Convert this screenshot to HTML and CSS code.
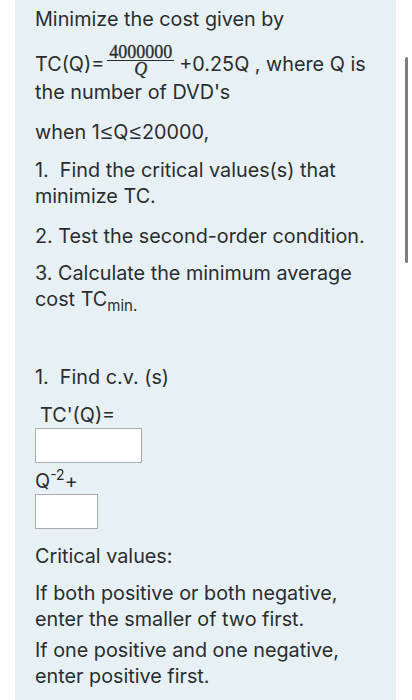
FILE: index.html
```html
<!DOCTYPE html>
<html>
<head>
<meta charset="utf-8">
<link rel="stylesheet" href="styles.css">
</head>
<body>
<div class="panel">
  <p class="l intro">Minimize the cost given by</p>
  <p class="l formula">TC(Q)=<span class="frac"><span class="num">4000000</span><span class="den">Q</span></span>+0.25Q , where Q is</p>
  <p class="l dvd">the number of DVD's</p>
  <p class="l when">when 1<span class="le">≤</span>Q<span class="le">≤</span>20000,</p>
  <p class="l step1">1.&nbsp; Find the critical values(s) that minimize TC.</p>
  <p class="l step2">2. Test the second-order condition.</p>
  <p class="l step3">3. Calculate the minimum average cost TC<sub class="sub">min.</sub></p>

  <p class="l find">1.&nbsp; Find c.v. (s)</p>
  <p class="l deriv">TC'(Q)=</p>
  <div class="box wide"></div>
  <p class="l qterm">Q<sup class="sup">-2</sup>+</p>
  <div class="box narrow"></div>

  <p class="l crit">Critical values:</p>
  <p class="l both">If both positive or both negative, enter the smaller of two first.</p>
  <p class="l one">If one positive and one negative, enter positive first.</p>
</div>
<div class="scrollbar"></div>
</body>
</html>
```

FILE: styles.css
```css
html, body {
  margin: 0;
  padding: 0;
  background: #ffffff;
}
body {
  font-family: Inter, "Noto Sans", "Liberation Sans", sans-serif;
  font-size: 19.8px;
  color: #2a2d2f;
  width: 412px;
  height: 700px;
  overflow: hidden;
}
.panel {
  margin-left: 15px;
  width: 381px;
  min-height: 700px;
  background: #e7f1f5;
  padding: 6px 20px 0 20px;
  box-sizing: border-box;
}
.l {
  margin: 0;
  line-height: 26px;
}
.formula {
  margin-top: 13px;
  white-space: nowrap;
}
.frac {
  display: inline-flex;
  flex-direction: column;
  align-items: center;
  font-family: "Liberation Serif", "DejaVu Serif", serif;
  vertical-align: 13px;
  margin: 0 5px 0 3px;
  line-height: 14px;
}
.num {
  font-size: 18px;
  line-height: 14px;
  padding: 0 2px 1px;
  border-bottom: 1.5px solid #2a2d2f;
  -webkit-text-stroke: 0.3px #2a2d2f;
}
.den {
  font-size: 18px;
  line-height: 15px;
  padding-top: 1px;
  font-style: italic;
  -webkit-text-stroke: 0.3px #2a2d2f;
}
.dvd { margin-top: 2px; }
.when { margin-top: 14px; }
.le {
  display: inline-block;
  font-family: "Liberation Sans", sans-serif;
  font-size: 21px;
  margin: 0 1px;
}
.step1 { margin-top: 12px; }
.step2 { margin-top: 14px; }
.step3 { margin-top: 11px; }
.sub {
  font-size: 15px;
  vertical-align: -5px;
  line-height: 1;
}
.find { margin-top: 51px; }
.deriv { margin-top: 12px; padding-left: 5px; }
.box {
  background: #ffffff;
  border: 1px solid #a9adb0;
  height: 35px;
  box-sizing: border-box;
}
.wide { width: 107px; margin-top: 0; }
.narrow { width: 63px; margin-top: 0; }
.qterm { margin-top: 5px; }
.sup {
  font-size: 14px;
  vertical-align: 8px;
  line-height: 0;
}
.crit { margin-top: 14px; }
.both { margin-top: 11px; }
.one { margin-top: 5px; }
.scrollbar {
  position: absolute;
  left: 405px;
  top: 57px;
  width: 3px;
  height: 206px;
  background: #7e7e7e;
  border-radius: 2px;
}
```
